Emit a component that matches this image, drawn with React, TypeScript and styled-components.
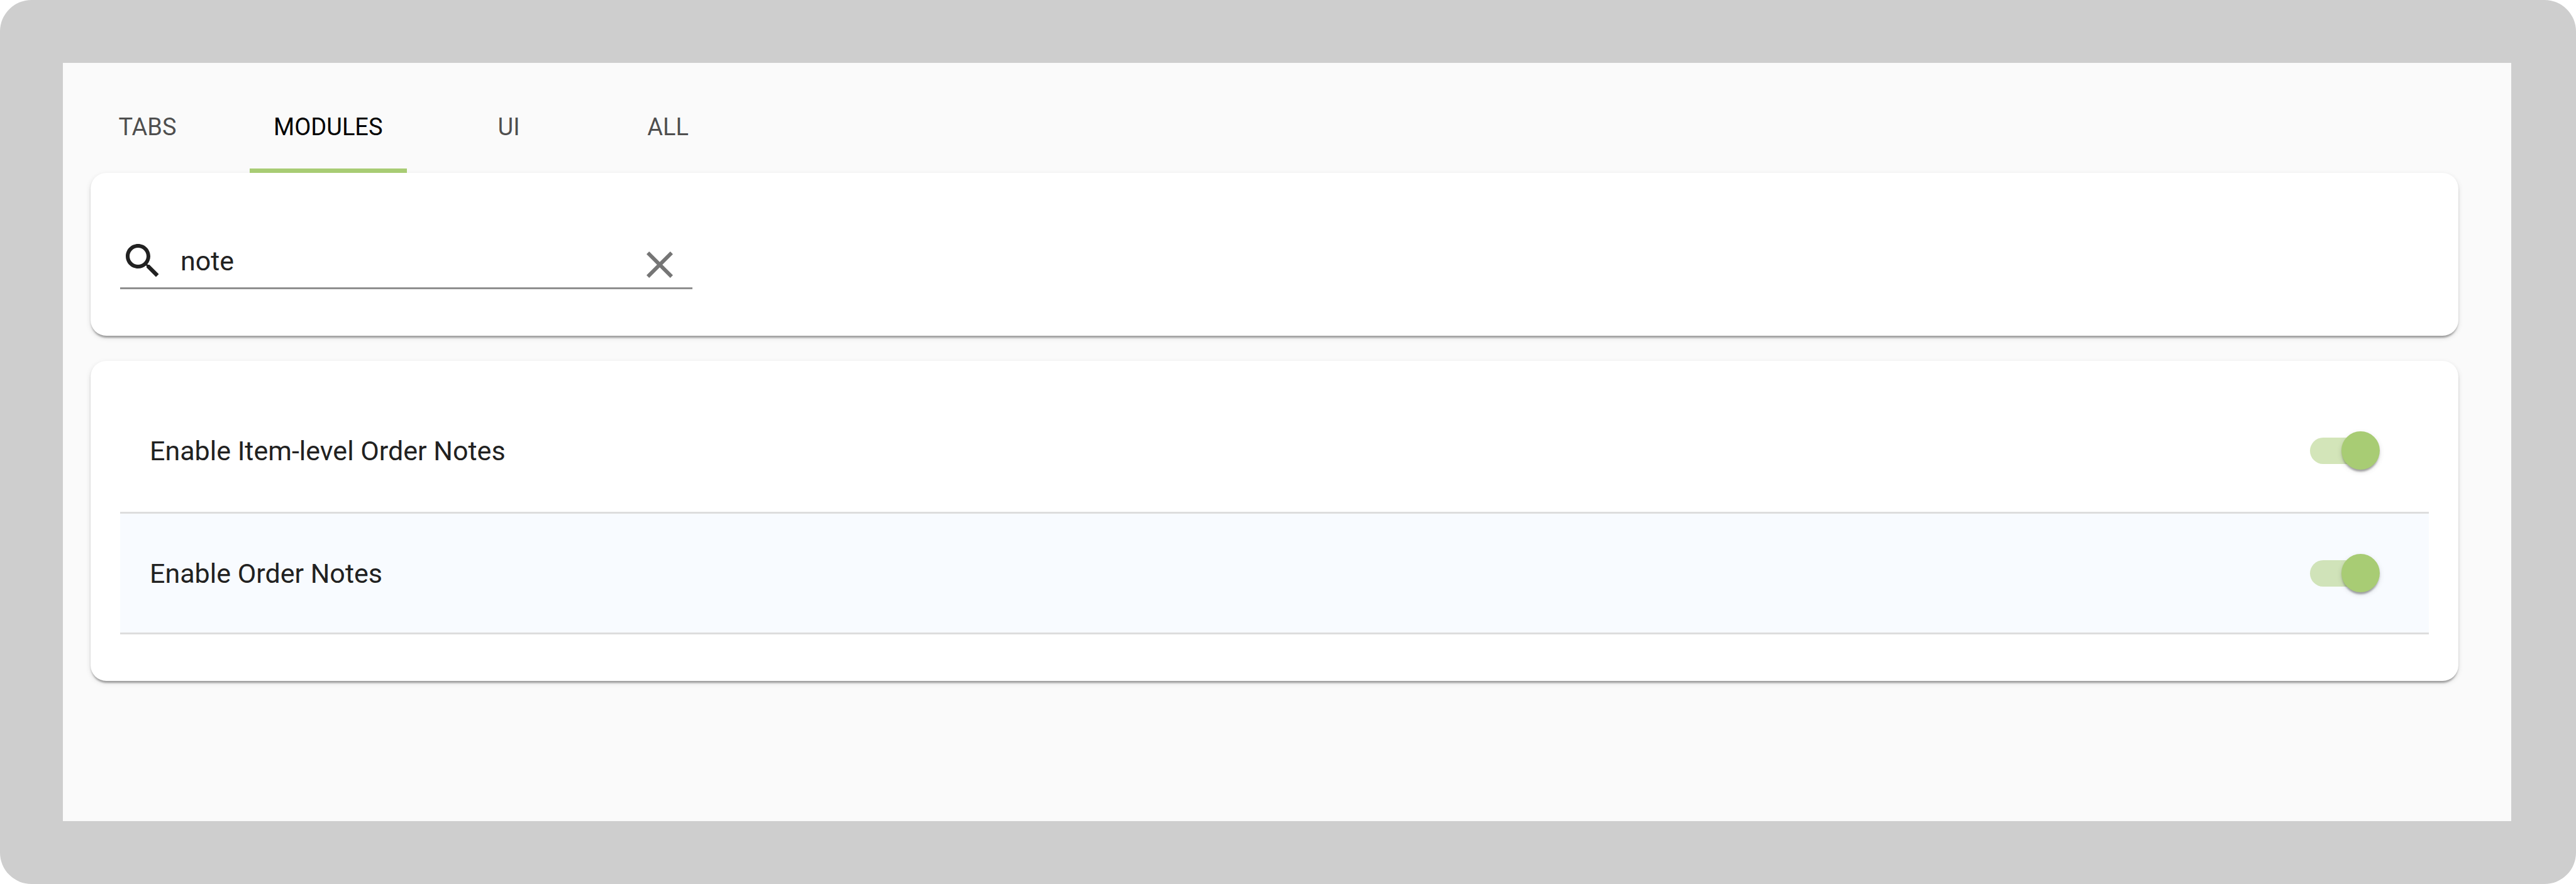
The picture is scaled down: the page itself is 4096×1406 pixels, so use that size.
import React, { useState } from "react";
import styled, { createGlobalStyle } from "styled-components";

const GlobalStyle = createGlobalStyle`
  *, *::before, *::after { box-sizing: border-box; }
  body {
    margin: 0;
    background: #ffffff;
    color: #212121;
    font-family: Roboto, "Liberation Sans", sans-serif;
  }
  button, input { font-family: inherit; }
`;

const Frame = styled.div`
  display: flex;
  min-height: 100vh;
  padding: 100px 103px 100px 100px;
  border-radius: 50px;
  background: #cecece;
`;

const Panel = styled.main`
  flex: 1;
  min-width: 0;
  padding: 27px 84px 41px 44px;
  background: #fafafa;
`;

const TabBar = styled.nav`
  display: flex;
  gap: 72px;
`;

const Tab = styled.button<{ $active: boolean }>`
  min-width: 181px;
  height: 148px;
  padding: 9px 38px 0;
  border: 0;
  border-bottom: 7px solid ${(p) => (p.$active ? "#a8cc74" : "transparent")};
  background: none;
  color: ${(p) => (p.$active ? "#000000" : "rgba(0, 0, 0, 0.7)")};
  font-size: 38px;
  line-height: 44px;
  text-transform: uppercase;
  cursor: pointer;
`;

const Card = styled.section`
  border-radius: 25px;
  background: #ffffff;
  box-shadow:
    0 6px 3px -3px rgba(0, 0, 0, 0.2),
    0 3px 3px 0 rgba(0, 0, 0, 0.14),
    0 3px 9px 0 rgba(0, 0, 0, 0.12);
`;

const SearchCard = styled(Card)`
  padding: 97px 47px 74px;
`;

const SettingsCard = styled(Card)`
  margin-top: 40px;
  padding: 45px 47px 74px;
`;

const SearchField = styled.div`
  display: flex;
  align-items: center;
  width: 910px;
  max-width: 100%;
  height: 88px;
  padding-right: 16px;
  border-bottom: 3px solid #8e8e8e;
`;

const SearchLabel = styled.label`
  display: flex;
  color: #212121;
`;

const Icon = styled.svg`
  display: block;
  width: 72px;
  height: 72px;
  fill: currentColor;
`;

const SearchInput = styled.input`
  flex: 1;
  min-width: 0;
  padding: 0 0 0 24px;
  border: 0;
  outline: 0;
  background: none;
  color: #212121;
  font-size: 43px;
  line-height: 50px;
`;

const ClearButton = styled.button`
  align-self: flex-end;
  padding: 0;
  border: 0;
  background: none;
  color: #757575;
  cursor: pointer;
`;

const SettingList = styled.ul`
  margin: 0;
  padding: 0;
  list-style: none;
`;

const SettingRow = styled.li`
  display: flex;
  align-items: center;
  justify-content: space-between;
  height: 192px;
  padding: 0 78px 0 47px;
  border-bottom: 3px solid #dddddd;

  &:first-child {
    height: 198px;
  }

  &:nth-child(even) {
    background: #f8fbff;
  }
`;

const SettingName = styled.label`
  font-size: 43px;
  line-height: 50px;
`;

const Switch = styled.input`
  display: grid;
  grid-template: 61px / 111px;
  align-items: center;
  width: 111px;
  height: 61px;
  margin: 0;
  appearance: none;
  cursor: pointer;

  &::before,
  &::after {
    content: "";
    grid-area: 1 / 1;
  }

  &::before {
    width: 104px;
    height: 42px;
    border-radius: 21px;
    background: rgba(0, 0, 0, 0.38);
  }

  &::after {
    width: 61px;
    height: 61px;
    border-radius: 50%;
    background: #fafafa;
    box-shadow:
      0 6px 3px -3px rgba(0, 0, 0, 0.2),
      0 3px 3px 0 rgba(0, 0, 0, 0.14),
      0 3px 9px 0 rgba(0, 0, 0, 0.12);
  }

  &:checked::before {
    background: rgba(168, 204, 116, 0.5);
  }

  &:checked::after {
    justify-self: end;
    background: #a8cc74;
  }
`;

const tabs = ["Tabs", "Modules", "UI", "All"];

const modules = [
  { id: "item-notes", name: "Enable Item-level Order Notes" },
  { id: "order-notes", name: "Enable Order Notes" },
];

export default function App() {
  const [activeTab, setActiveTab] = useState("Modules");
  const [query, setQuery] = useState("note");

  const visible = modules.filter((m) =>
    m.name.toLowerCase().includes(query.toLowerCase())
  );

  return (
    <Frame>
      <GlobalStyle />
      <Panel>
        <TabBar role="tablist">
          {tabs.map((tab) => (
            <Tab
              key={tab}
              type="button"
              role="tab"
              aria-selected={tab === activeTab}
              $active={tab === activeTab}
              onClick={() => setActiveTab(tab)}
            >
              {tab}
            </Tab>
          ))}
        </TabBar>

        <SearchCard>
          <SearchField>
            <SearchLabel htmlFor="search" aria-label="Search">
              <Icon viewBox="0 0 24 24" aria-hidden="true">
                <path d="M15.5 14h-.79l-.28-.27C15.41 12.59 16 11.11 16 9.5 16 5.91 13.09 3 9.5 3S3 5.91 3 9.5 5.91 16 9.5 16c1.61 0 3.09-.59 4.23-1.57l.27.28v.79l5 4.99L20.49 19l-4.99-5zm-6 0C7.01 14 5 11.99 5 9.5S7.01 5 9.5 5 14 7.01 14 9.5 11.99 14 9.5 14z" />
              </Icon>
            </SearchLabel>
            <SearchInput
              id="search"
              type="text"
              value={query}
              onChange={(e) => setQuery(e.target.value)}
            />
            <ClearButton
              type="button"
              aria-label="Clear search"
              onClick={() => setQuery("")}
            >
              <Icon viewBox="0 0 24 24" aria-hidden="true">
                <path d="M19 6.41L17.59 5 12 10.59 6.41 5 5 6.41 10.59 12 5 17.59 6.41 19 12 13.41 17.59 19 19 17.59 13.41 12z" />
              </Icon>
            </ClearButton>
          </SearchField>
        </SearchCard>

        <SettingsCard>
          <SettingList>
            {visible.map((m) => (
              <SettingRow key={m.id}>
                <SettingName htmlFor={m.id}>{m.name}</SettingName>
                <Switch id={m.id} type="checkbox" role="switch" defaultChecked />
              </SettingRow>
            ))}
          </SettingList>
        </SettingsCard>
      </Panel>
    </Frame>
  );
}
